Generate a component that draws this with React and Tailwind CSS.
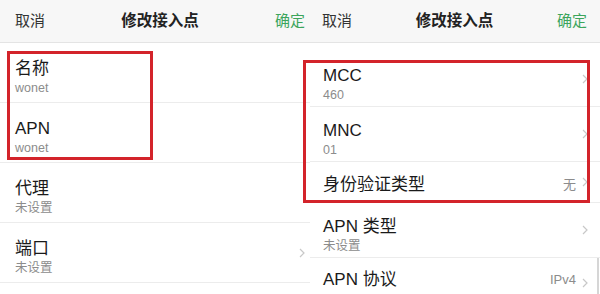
import React from 'react';

const font = { fontFamily: '"Liberation Sans", "Noto Sans CJK SC", sans-serif' };

function Chevron() {
  return (
    <svg width="6" height="10" viewBox="0 0 6 10" className="self-center">
      <polyline points="1,1 5,5 1,9" fill="none" stroke="#c8c8c8" strokeWidth="1.2" />
    </svg>
  );
}

function Header({ pad }) {
  return (
    <div className={`h-[43px] shrink-0 flex items-center bg-[#f7f7f7] border-b border-[#e4e4e4] ${pad}`}>
      <div className="w-[50px] text-[15px] text-[#333]">取消</div>
      <div className="flex-1 text-center text-[15.5px] font-semibold text-[#222]">修改接入点</div>
      <div className="w-[50px] text-right text-[15px] text-[#3ca55c]">确定</div>
    </div>
  );
}

function Row({ title, sub, value, chevron, h = 'h-[55px]', pt = 'pt-[13px]', px = 'pl-[13px] pr-[12px]' }) {
  return (
    <div className={`${h} ${px} shrink-0 flex items-start border-b border-[#ececec] bg-white`}>
      <div className={`flex-1 min-w-0 ${pt}`}>
        <div className="text-[17px] leading-[22px] text-[#1a1a1a]">{title}</div>
        {sub && <div className="text-[12.5px] leading-[16px] text-[#8c8c8c]">{sub}</div>}
      </div>
      {value && <div className={`text-[13px] leading-[22px] text-[#8c8c8c] mr-[6px] ${pt}`}>{value}</div>}
      {chevron && <Chevron />}
    </div>
  );
}

export default function App() {
  return (
    <div className="relative w-[600px] h-[294px] overflow-hidden bg-white flex" style={font}>
      <div className="w-[310px] flex flex-col">
        <Header pad="pl-[15px] pr-[5px]" />
        <Row title="名称" sub="wonet" h="h-[60px]" pt="pt-[15px]" px="pl-[15px] pr-[5px]" />
        <Row title="APN" sub="wonet" h="h-[60px]" pt="pt-[15px]" px="pl-[15px] pr-[5px]" />
        <Row title="代理" sub="未设置" h="h-[60px]" pt="pt-[15px]" px="pl-[15px] pr-[5px]" />
        <Row title="端口" sub="未设置" h="h-[60px]" pt="pt-[15px]" px="pl-[15px] pr-[5px]" chevron />
      </div>
      <div className="w-[290px] flex flex-col">
        <Header pad="pl-[12px] pr-[13px]" />
        <div className="h-[9px] shrink-0" />
        <Row title="MCC" sub="460" chevron />
        <Row title="MNC" sub="01" chevron />
        <Row title="身份验证类型" value="无" h="h-[41px]" pt="pt-[12px]" chevron />
        <Row title="APN 类型" sub="未设置" chevron />
        <Row title="APN 协议" value="IPv4" h="h-[50px]" pt="pt-[11px]" chevron />
      </div>
      <div className="absolute left-[7px] top-[51px] w-[146px] h-[109px] border-[3px] border-[#d3232a]" />
      <div className="absolute left-[303px] top-[60px] w-[287px] h-[143px] border-[3px] border-[#d3232a]" />
      <div className="absolute left-[597px] top-[258px] w-[2px] h-[36px] bg-[#d6d6d6]" />
    </div>
  );
}
